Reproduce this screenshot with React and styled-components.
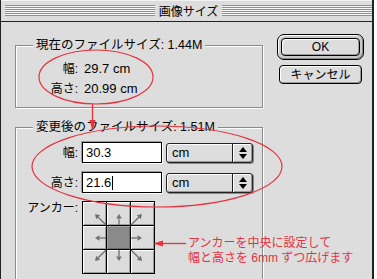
import React from 'react'
import styled, { createGlobalStyle } from 'styled-components'

const RED = '#e6323f'

const GlobalStyle = createGlobalStyle`
  html, body {
    margin: 0;
    padding: 0;
    height: 279px;
    overflow: hidden;
    background: #ffffff;
  }
  body {
    color: #000;
    font-family: "Liberation Sans", "Noto Sans CJK JP", sans-serif;
  }
`

const Window = styled.div`
  background: #dddddd;
  border-left: 1px solid #222;
  border-right: 2px solid #222;
  box-sizing: border-box;
  height: 279px;
  overflow: hidden;
  position: relative;
  width: 374px;
`

const TitleBar = styled.div`
  align-items: center;
  background: #dddddd;
  border-bottom: 1px solid #222;
  box-shadow: inset 0 1px 0 #f2f2f2;
  display: flex;
  height: 21px;
  padding-left: 4px;
`

const Stripes = styled.div`
  background: repeating-linear-gradient(to bottom, #8e8e8e 0 1px, #f8f8f8 1px 2px);
  flex: 1;
  height: 11px;
`

const Title = styled.div`
  font-family: "Noto Sans CJK JP", sans-serif;
  font-size: 12px;
  line-height: 21px;
  padding: 0 4px;
`

const Body = styled.div`
  align-items: flex-start;
  display: flex;
  gap: 14px;
  padding-left: 14px;
`

const LeftColumn = styled.div`
  display: flex;
  flex-direction: column;
  gap: 12px;
  padding-top: 16px;
  width: 248px;
`

const ButtonColumn = styled.div`
  align-items: center;
  display: flex;
  flex-direction: column;
  gap: 5px;
  padding-top: 12px;
  width: 87px;
`

const Group = styled.fieldset`
  border: 1px solid #8a8a8a;
  box-shadow: 1px 1px 0 #fff, inset 1px 1px 0 #fff;
  box-sizing: border-box;
  margin: 0;
  min-inline-size: 0;
  padding: ${({ $pad }) => $pad};
  width: 248px;
`

const Legend = styled.legend`
  background: #dddddd;
  font-size: 12.5px;
  line-height: 14px;
  margin-left: 17px;
  padding: 0 3px;
`

const InfoGrid = styled.div`
  column-gap: 6px;
  display: grid;
  grid-template-columns: 62px auto;
  line-height: 20px;
`

const FormGrid = styled.div`
  align-items: center;
  column-gap: 4px;
  display: grid;
  grid-template-columns: 62px 80px 87px;
  row-gap: 9px;
`

const Label = styled.div`
  align-self: ${({ $top }) => ($top ? 'start' : 'center')};
  font-size: 12px;
  line-height: ${({ $top }) => ($top ? '14px' : '20px')};
  margin-top: ${({ $top }) => ($top ? '-1px' : '0')};
  text-align: right;
`

const Value = styled.div`
  font-size: 13px;
`

const TextField = styled.div`
  align-items: center;
  background: #fff;
  border: 1px solid #000;
  box-shadow: -1px -1px 0 #9a9a9a, 1px 1px 0 #fff;
  box-sizing: border-box;
  display: flex;
  font-size: 13px;
  height: 21px;
  padding-left: 3px;
  width: 80px;
`

const Caret = styled.span`
  background: #000;
  display: inline-block;
  height: 14px;
  margin-left: 1px;
  width: 1px;
`

const Popup = styled.div`
  background: #dddddd;
  border: 1px solid #222;
  border-radius: 3px;
  box-shadow: inset 1px 1px 0 #fff, inset -1px -1px 0 #9a9a9a, 1px 1px 0 #8a8a8a;
  box-sizing: border-box;
  display: flex;
  height: 20px;
  width: 87px;
`

const PopupText = styled.div`
  flex: 1;
  font-size: 13px;
  line-height: 18px;
  padding-left: 5px;
`

const PopupArrows = styled.div`
  align-items: center;
  border-left: 1px solid #222;
  box-shadow: inset 1px 0 0 #fff;
  box-sizing: border-box;
  display: flex;
  justify-content: center;
  width: 20px;
`

const AnchorGrid = styled.div`
  background: #000;
  display: grid;
  gap: 1px;
  grid-template-columns: repeat(3, 23px);
  grid-template-rows: repeat(3, 23px);
  justify-self: start;
  margin-top: -1px;
  padding: 1px;
`

const align = (d) => (d < 0 ? 'flex-end' : d > 0 ? 'flex-start' : 'center')

const AnchorCell = styled.div`
  align-items: ${({ $dy }) => align($dy)};
  background: ${({ $center }) => ($center ? '#8a8a8a' : '#dcdcdc')};
  box-shadow: ${({ $center }) =>
    $center
      ? 'inset 1px 1px 0 #a4a4a4, inset -1px -1px 0 #6c6c6c'
      : 'inset 1px 1px 0 #fff, inset -1px -1px 0 #9c9c9c'};
  display: flex;
  justify-content: ${({ $dx }) => align($dx)};
`

const DefaultRing = styled.div`
  background: #c9c9c9;
  border: 1px solid #000;
  border-radius: 7px;
  box-shadow: inset 1px 1px 0 #fff, inset -1px -1px 0 #8a8a8a;
  box-sizing: border-box;
  height: 26px;
  padding: 3px;
  width: 87px;
`

const Button = styled.button`
  background: #dddddd;
  border: 1px solid #000;
  border-radius: 4px;
  box-shadow: inset 1px 1px 0 #fff, inset -1px -1px 0 #9a9a9a;
  box-sizing: border-box;
  color: #000;
  display: block;
  font-family: "Liberation Sans Narrow", "Liberation Sans", "Noto Sans CJK JP", sans-serif;
  font-size: 12px;
  height: ${({ $h }) => $h}px;
  line-height: 1;
  padding: 0;
  width: ${({ $w }) => $w}px;
`

const Overlay = styled.svg`
  left: -1px;
  overflow: visible;
  pointer-events: none;
  position: absolute;
  top: 0;
`

const Note = styled.div`
  color: ${RED};
  font-size: 12px;
  left: 187px;
  line-height: 15px;
  position: absolute;
  top: 236px;
  white-space: nowrap;
`

const AnchorArrow = ({ dx, dy }) => {
  const len = Math.hypot(dx, dy)
  const ux = dx / len
  const uy = dy / len
  const tail = [6 - dx * 6, 6 - dy * 6]
  const tip = [6 + dx * 5, 6 + dy * 5]
  const base = [tip[0] - ux * 4.5, tip[1] - uy * 4.5]
  const px = -uy * 2.8
  const py = ux * 2.8
  const head = `${tip[0]},${tip[1]} ${base[0] + px},${base[1] + py} ${base[0] - px},${base[1] - py}`

  return (
    <svg width='12' height='12' viewBox='0 0 12 12'>
      <line x1={tail[0]} y1={tail[1]} x2={base[0]} y2={base[1]} stroke='#707070' strokeWidth='1.3' />
      <polygon points={head} fill='#707070' />
    </svg>
  )
}

const UpDown = () => (
  <svg width='8' height='12' viewBox='0 0 8 12'>
    <polygon points='4,0 8,5 0,5' fill='#000' />
    <polygon points='0,7 8,7 4,12' fill='#000' />
  </svg>
)

const cells = [-1, 0, 1].flatMap((dy) => [-1, 0, 1].map((dx) => ({ dx, dy })))

export default function App() {
  return (
    <>
      <GlobalStyle />
      <Window>
        <TitleBar>
          <Stripes />
          <Title>画像サイズ</Title>
          <Stripes />
        </TitleBar>

        <Body>
          <LeftColumn>
            <Group $pad='7px 0 8px 0'>
              <Legend>現在のファイルサイズ: 1.44M</Legend>
              <InfoGrid>
                <Label>幅:</Label>
                <Value>29.7 cm</Value>
                <Label>高さ:</Label>
                <Value>20.99 cm</Value>
              </InfoGrid>
            </Group>

            <Group $pad='8px 0 20px 0'>
              <Legend>変更後のファイルサイズ: 1.51M</Legend>
              <FormGrid>
                <Label>幅:</Label>
                <TextField>30.3</TextField>
                <Popup>
                  <PopupText>cm</PopupText>
                  <PopupArrows>
                    <UpDown />
                  </PopupArrows>
                </Popup>

                <Label>高さ:</Label>
                <TextField>
                  21.6
                  <Caret />
                </TextField>
                <Popup>
                  <PopupText>cm</PopupText>
                  <PopupArrows>
                    <UpDown />
                  </PopupArrows>
                </Popup>

                <Label $top>アンカー:</Label>
                <AnchorGrid>
                  {cells.map(({ dx, dy }) => (
                    <AnchorCell key={`${dx}${dy}`} $dx={dx} $dy={dy} $center={!dx && !dy}>
                      {(dx || dy) ? <AnchorArrow dx={dx} dy={dy} /> : null}
                    </AnchorCell>
                  ))}
                </AnchorGrid>
              </FormGrid>
            </Group>
          </LeftColumn>

          <ButtonColumn>
            <DefaultRing>
              <Button $w={79} $h={18}>OK</Button>
            </DefaultRing>
            <Button $w={83} $h={19}>キャンセル</Button>
          </ButtonColumn>
        </Body>

        <Overlay width='374' height='279'>
          <ellipse cx='96' cy='77' rx='57' ry='27' fill='none' stroke={RED} strokeWidth='1.2' />
          <line x1='92.5' y1='104' x2='92.5' y2='121' stroke={RED} strokeWidth='1.3' />
          <polygon points='89.5,120 95.5,120 92.5,131' fill={RED} />
          <ellipse cx='157' cy='166.5' rx='125' ry='40.5' fill='none' stroke={RED} strokeWidth='1.2' />
          <line x1='186' y1='243.5' x2='162' y2='243.5' stroke={RED} strokeWidth='1.3' />
          <polygon points='153,243.5 163,240.5 163,246.5' fill={RED} />
        </Overlay>

        <Note>
          アンカーを中央に設定して
          <br />
          幅と高さを 6mm ずつ広げます
        </Note>
      </Window>
    </>
  )
}
